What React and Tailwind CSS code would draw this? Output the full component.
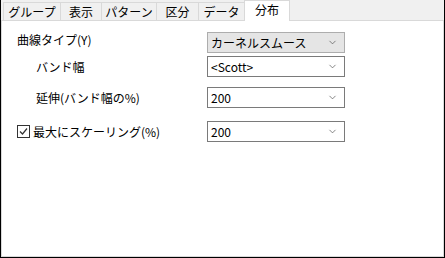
import { ChevronDown } from 'lucide-react';

const tabs = ['グループ', '表示', 'パターン', '区分', 'データ', '分布'];
const tabWidths = ['w-[58px]', 'w-[42px]', 'w-[56px]', 'w-[43px]', 'w-[47px]', 'w-[46px]'];

const Combo = ({ value, gray }) => (
  <div
    className={`w-[138px] h-[21px] flex items-center justify-between pl-[3px] pr-[6px] border ${
      gray ? 'bg-[#e5e5e5] border-[#adadad]' : 'bg-white border-[#7a7a7a]'
    }`}
  >
    <span className="text-[12px] leading-none text-black">{value}</span>
    <ChevronDown size={11} strokeWidth={1.5} className="text-[#505050]" />
  </div>
);

const App = () => {
  return (
    <div
      className="w-[445px] h-[258px] bg-[#f0f0f0] border-x border-b border-black flex flex-col overflow-hidden"
      style={{ fontFamily: '"Noto Sans CJK JP", "Noto Sans", sans-serif' }}
    >
      {/* tab strip */}
      <div className="h-[21px] flex items-end pl-[2px] shrink-0">
        {tabs.map((t, i) => {
          const active = i === tabs.length - 1;
          return (
            <div
              key={t}
              className={`${tabWidths[i]} flex items-center justify-center text-[12px] text-black border-t border-l border-r border-[#d9d9d9] -mr-px ${
                active ? 'h-[21px] bg-white relative z-10 pb-[2px]' : 'h-[19px] bg-[#f0f0f0]'
              }`}
            >
              {t}
            </div>
          );
        })}
      </div>

      {/* panel */}
      <div className="flex-1 bg-white border border-[#d9d9d9] -mt-px pt-[11px] pl-[15px]">
        <div className="flex items-center">
          <div className="w-[190px] text-[12px] text-black -mt-[6px]">曲線タイプ(Y)</div>
          <Combo value="カーネルスムース" gray />
        </div>

        <div className="flex items-center mt-[3px]">
          <div className="w-[190px] pl-[19px] text-[12px] text-black">バンド幅</div>
          <Combo value="<Scott>" />
        </div>

        <div className="flex items-center mt-[10px]">
          <div className="w-[190px] pl-[19px] text-[12px] text-black">延伸(バンド幅の%)</div>
          <Combo value="200" />
        </div>

        <div className="flex items-center mt-[13px]">
          <div className="w-[190px] flex items-center gap-[3px] text-[12px] text-black">
            <span className="w-[13px] h-[13px] border border-[#333] bg-white flex items-center justify-center">
              <svg width="11" height="11" viewBox="0 0 11 11">
                <path d="M2 5.5 L4.5 8 L9 2.5" fill="none" stroke="#333" strokeWidth="1.2" />
              </svg>
            </span>
            最大にスケーリング(%)
          </div>
          <Combo value="200" />
        </div>
      </div>
    </div>
  );
};

export default App;
